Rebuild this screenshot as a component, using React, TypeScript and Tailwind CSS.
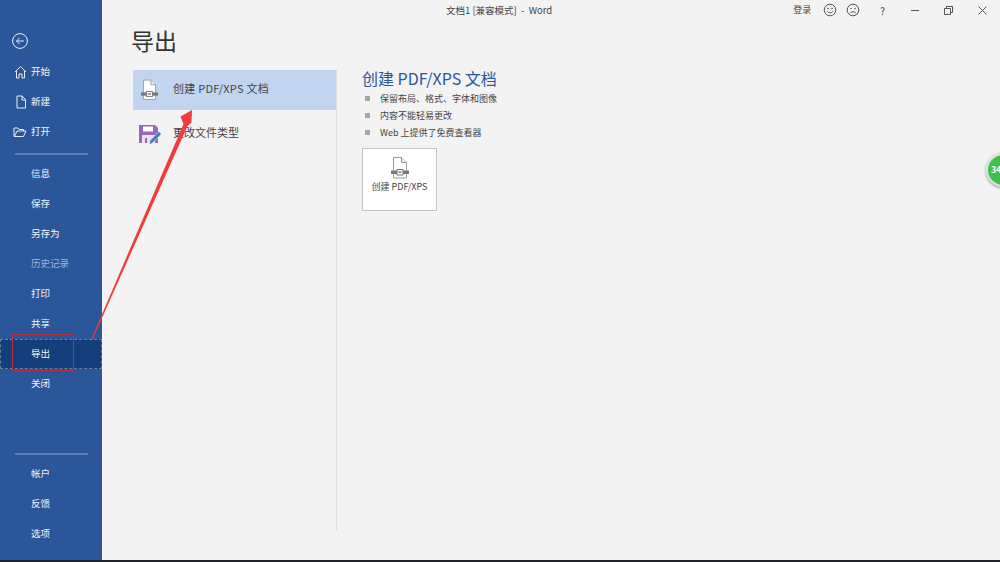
import React from "react";

const font = { fontFamily: '"Noto Sans CJK SC", "Noto Sans", sans-serif' };

function Row({ label, icon, active, muted }: { label: string; icon?: React.ReactNode; active?: boolean; muted?: boolean }) {
  return (
    <div className={`relative flex h-[30px] items-center text-[9.500px] ${active ? "border border-dashed border-[#6d7f99] bg-[#143f7a]" : ""} ${muted ? "text-[#9db2d3]" : "text-[#f2f5fa]"}`}>
      <div className={`flex shrink-0 justify-end pr-[4px] ${active ? "w-[30px]" : "w-[31px]"}`}>{icon}</div>
      <span className="mb-[2px]">{label}</span>
    </div>
  );
}

const W = { width: 12, height: 14, viewBox: "0 0 12 14", fill: "none", stroke: "#e8eef7", strokeWidth: 1 };

const Home = () => (
  <svg {...W} width={13} viewBox="0 0 13 14"><path d="M1 7 6.500 1.500 12 7M2.500 6v7H5V9h3v4h2.500V6" /></svg>
);
const NewDoc = () => (
  <svg {...W}><path d="M2 1h5l3.500 3.500V13H2zM7 1v4h3.500" /></svg>
);
const Open = () => (
  <svg {...W} width={14} viewBox="0 0 14 14"><path d="M1 3h4l1 1.500h4.500V6M1 3v8.500h9.500L13 6H4L1.500 11.500" /></svg>
);

function PdfIcon() {
  return (
    <svg width="18" height="22" viewBox="0 0 18 22" fill="none">
      <path d="M2.500 .5h8l5 5v15.500h-13z" fill="#fff" stroke="#9a9a9a" />
      <path d="M10.500 .5v5h5" fill="#efefef" stroke="#9a9a9a" />
      <rect x="0" y="13.500" width="18" height="3.500" fill="#7a7a7a" />
      <rect x="6" y="12.500" width="6" height="5.500" fill="#fff" stroke="#7a7a7a" />
      <rect x="7.500" y="14.500" width="3" height="1.500" fill="#7a7a7a" />
    </svg>
  );
}

function Smile({ sad }: { sad?: boolean }) {
  return (
    <svg width="14" height="14" viewBox="0 0 14 14" fill="none" stroke="#555" strokeWidth="1">
      <circle cx="7" cy="7" r="5.800" />
      <circle cx="5" cy="5.500" r=".8" fill="#555" stroke="none" />
      <circle cx="9" cy="5.500" r=".8" fill="#555" stroke="none" />
      <path d={sad ? "M4.200 10c1.500-1.700 4.100-1.700 5.600 0" : "M4 8.200c1.500 2.200 4.500 2.200 6 0"} />
    </svg>
  );
}

function Bullet({ children }: { children: React.ReactNode }) {
  return (
    <div className="flex h-[17px] items-center text-[9px] text-[#444]">
      <span className="ml-[3px] mr-[10px] h-[5px] w-[5px] bg-[#a6a6a6]" />
      <span>{children}</span>
    </div>
  );
}

export default function App() {
  return (
    <div style={font} className="relative flex h-[562px] w-[1000px] flex-col overflow-hidden bg-[#f3f3f3]">
      <div className="flex min-h-0 flex-1">
        <aside className="flex w-[103px] shrink-0 flex-col border-r border-r-[#f8f8f8] bg-[#2b579a]">
          <div className="flex h-[57px] items-end pb-[8px] pl-[12px]">
            <svg width="16" height="16" viewBox="0 0 16 16" fill="none" stroke="#e8eef7" strokeWidth="1">
              <circle cx="8" cy="8" r="7.400" />
              <path d="M12 8H4.500M7.500 5 4.500 8l3 3" />
            </svg>
          </div>
          <Row label="开始" icon={<Home />} />
          <Row label="新建" icon={<NewDoc />} />
          <Row label="打开" icon={<Open />} />
          <div className="ml-[15px] mb-[4px] mt-[6px] h-[2px] w-[73px] bg-[#5580b5]" />
          <Row label="信息" />
          <Row label="保存" />
          <Row label="另存为" />
          <Row label="历史记录" muted />
          <Row label="打印" />
          <Row label="共享" />
          <Row label="导出" active />
          <Row label="关闭" />
          <div className="ml-[15px] mb-[4px] mt-[54px] h-[2px] w-[73px] bg-[#5580b5]" />
          <Row label="帐户" />
          <Row label="反馈" />
          <Row label="选项" />
        </aside>

        <main className="flex min-w-0 flex-1 flex-col">
          <header className="flex h-[22px] items-center pb-[2px] text-[#444]">
            <div className="flex-1 whitespace-pre pl-[343px] text-[9.500px]">文档1 [兼容模式]  -  Word</div>
            <div className="flex items-center">
              <span className="mr-[12px] text-[9px]">登录</span>
              <span className="mr-[9px]"><Smile /></span>
              <span className="mr-[20px]"><Smile sad /></span>
              <span className="mr-[26px] text-[10px]">?</span>
              <svg className="mr-[25px]" width="8" height="8" viewBox="0 0 8 8" stroke="#555"><path d="M0 4.500h8" /></svg>
              <svg className="mr-[25px]" width="9" height="9" viewBox="0 0 9 9" fill="none" stroke="#555"><path d="M.5 2.500h6v6h-6zM2.500 2.500v-2h6v6h-2" /></svg>
              <svg className="mr-[13px]" width="9" height="9" viewBox="0 0 9 9" fill="none" stroke="#555"><path d="m.5.5 8 8M8.500.5l-8 8" /></svg>
            </div>
          </header>

          <h1 className="ml-[28px] h-[48px] text-[23px] font-normal leading-[36px] text-[#333]">导出</h1>

          <div className="flex min-h-0 flex-1 pb-[30px] pl-[30px]">
            <div className="h-[460px] w-[204px] shrink-0 border-r border-r-[#dcdcdc]">
              <div className="flex h-[40px] items-center bg-[#c1d5f0] text-[11px] text-[#444]">
                <span className="ml-[8px] mr-[15px] flex w-[17px] justify-center"><PdfIcon /></span>
                <span className="mb-[4px] tracking-[0.25px]">创建 PDF/XPS 文档</span>
              </div>
              <div className="flex h-[44px] items-center text-[11px] text-[#444]">
                <svg className="ml-[6px] mr-[11px] mt-[6px]" width="23" height="22" viewBox="0 0 23 22">
                  <path d="M0 1h16l3 3v15H0z" fill="#9b65b8" />
                  <rect x="4" y="2.500" width="10" height="5" fill="#fff" />
                  <rect x="3" y="11" width="13" height="8" fill="#ece2f2" />
                  <rect x="6" y="14" width="2" height="5" fill="#9b65b8" />
                  <path d="m10 21 1-4.500 9-9 2.500 2.500-9 9z" fill="#3c78c8" stroke="#fff" strokeWidth=".6" />
                </svg>
                <span>更改文件类型</span>
              </div>
            </div>

            <section className="ml-[25px] -mt-[2px] flex flex-col">
              <h2 className="h-[20px] text-[16px] font-normal leading-[20px] text-[#2b579a]">创建 PDF/XPS 文档</h2>
              <div className="mt-[2px]">
                <Bullet>保留布局、格式、字体和图像</Bullet>
                <Bullet>内容不能轻易更改</Bullet>
                <Bullet>Web 上提供了免费查看器</Bullet>
              </div>
              <div className="mt-[7px] flex h-[63px] w-[75px] flex-col items-center border border-[#c6c6c6] bg-white pt-[8px] text-[9px] text-[#444]">
                <PdfIcon />
                <span className="mt-[1px]">创建 PDF/XPS</span>
              </div>
            </section>
          </div>
        </main>
      </div>
      <div className="h-[2px] bg-[#22252b]" />

      {/* floating green badge */}
      <div className="absolute left-[986px] top-[153px] flex h-[34px] w-[34px] items-center rounded-full border-2 border-[#e0e4e0] bg-[#3fc04a] pl-[3px] text-[9px] font-bold text-white shadow-[0_1px_3px_rgba(0,0,0,0.4)]">34</div>

      {/* annotations over the screenshot */}
      <div className="absolute left-[12px] top-[334px] h-[37px] w-[62px] border border-[#b5303f]" />
      <svg className="absolute left-0 top-0" width="1000" height="562" viewBox="0 0 1000 562" fill="none">
        <path d="M91 340 183.500 124 180.500 116.500 192 110 191.500 122.500 187.500 126 92 340.500z" fill="#f23b3b" />
      </svg>
    </div>
  );
}
